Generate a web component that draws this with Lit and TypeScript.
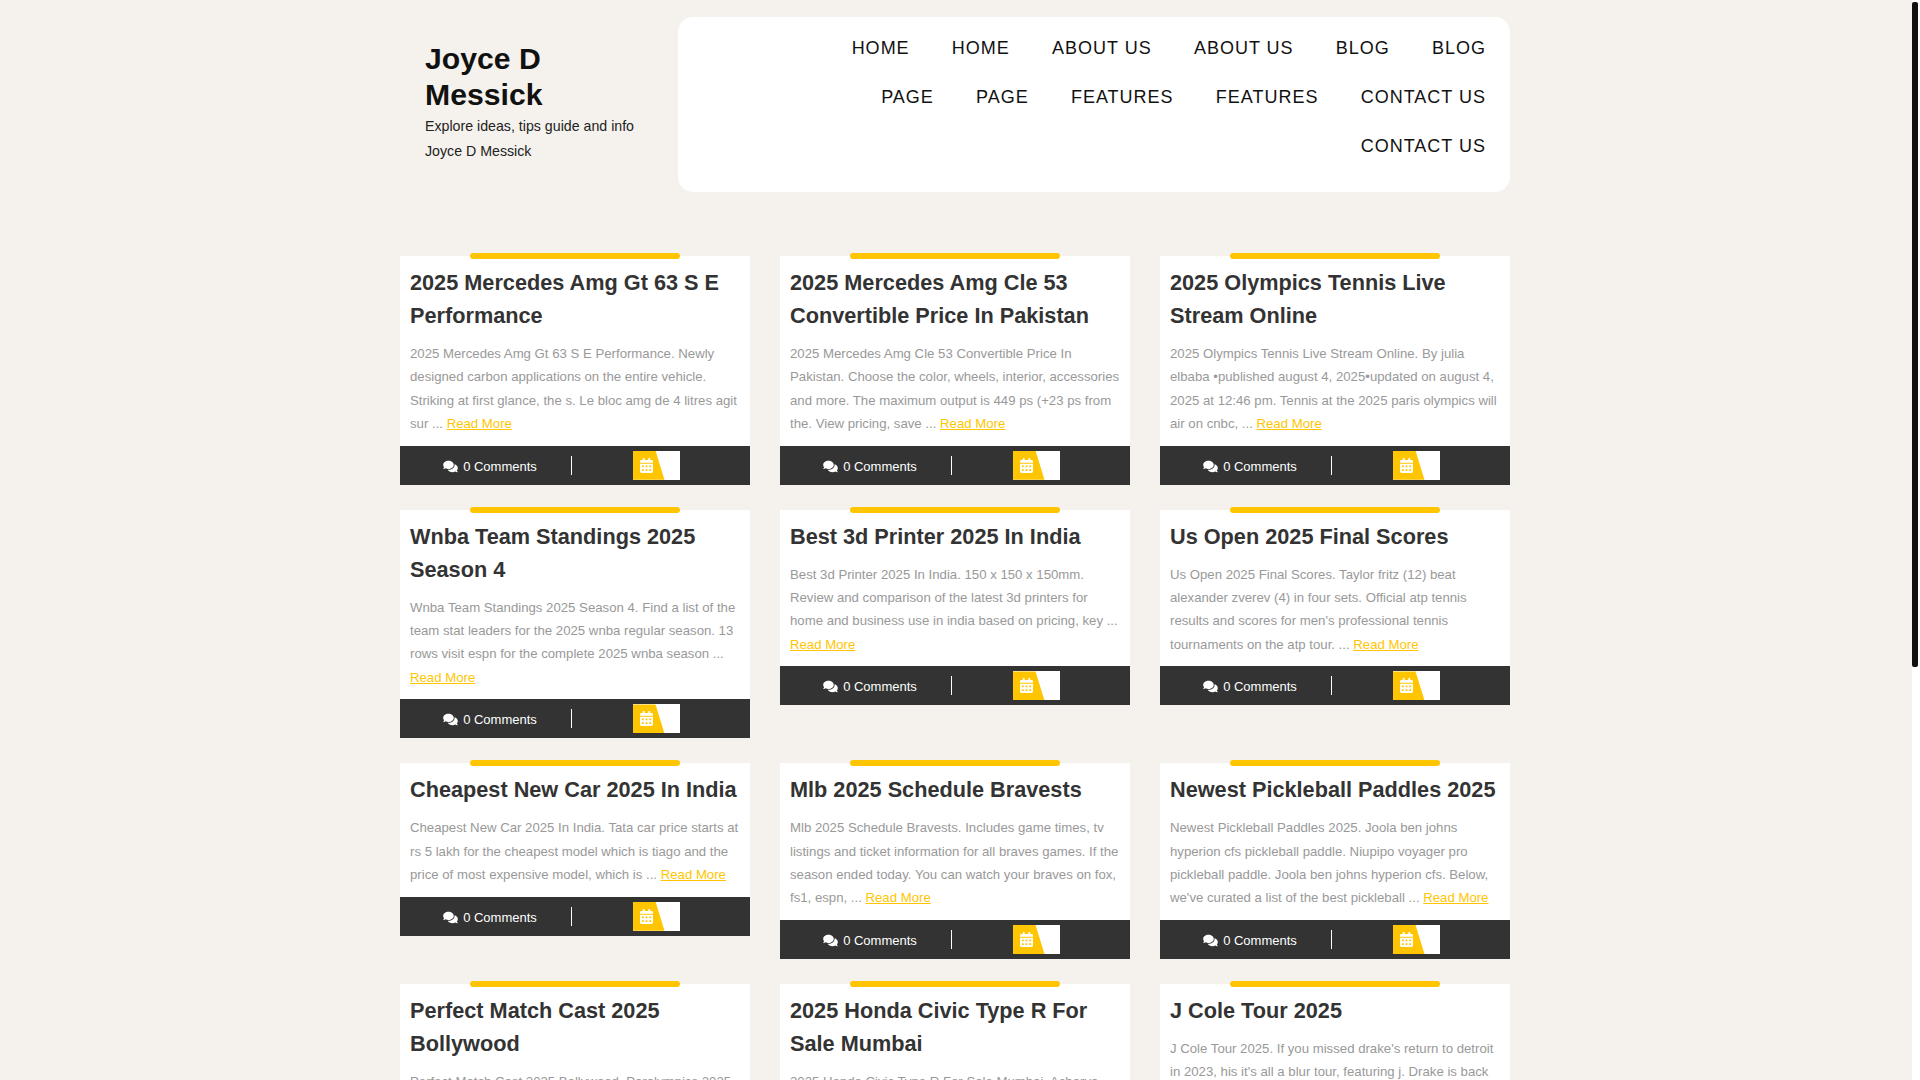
import { LitElement, html, css } from "lit";
import { customElement } from "lit/decorators.js";

const NAV = ["HOME", "HOME", "ABOUT US", "ABOUT US", "BLOG", "BLOG", "PAGE", "PAGE", "FEATURES", "FEATURES", "CONTACT US", "CONTACT US"];

const POSTS = [
  ["2025 Mercedes Amg Gt 63 S E Performance", "2025 Mercedes Amg Gt 63 S E Performance. Newly designed carbon applications on the entire vehicle. Striking at first glance, the s. Le bloc amg de 4 litres agit sur ..."],
  ["2025 Mercedes Amg Cle 53 Convertible Price In Pakistan", "2025 Mercedes Amg Cle 53 Convertible Price In Pakistan. Choose the color, wheels, interior, accessories and more. The maximum output is 449 ps (+23 ps from the. View pricing, save ..."],
  ["2025 Olympics Tennis Live Stream Online", "2025 Olympics Tennis Live Stream Online. By julia elbaba •published august 4, 2025•updated on august 4, 2025 at 12:46 pm. Tennis at the 2025 paris olympics will air on cnbc, ..."],
  ["Wnba Team Standings 2025 Season 4", "Wnba Team Standings 2025 Season 4. Find a list of the team stat leaders for the 2025 wnba regular season. 13 rows visit espn for the complete 2025 wnba season ..."],
  ["Best 3d Printer 2025 In India", "Best 3d Printer 2025 In India. 150 x 150 x 150mm. Review and comparison of the latest 3d printers for home and business use in india based on pricing, key ..."],
  ["Us Open 2025 Final Scores", "Us Open 2025 Final Scores. Taylor fritz (12) beat alexander zverev (4) in four sets. Official atp tennis results and scores for men's professional tennis tournaments on the atp tour. ..."],
  ["Cheapest New Car 2025 In India", "Cheapest New Car 2025 In India. Tata car price starts at rs 5 lakh for the cheapest model which is tiago and the price of most expensive model, which is ..."],
  ["Mlb 2025 Schedule Bravests", "Mlb 2025 Schedule Bravests. Includes game times, tv listings and ticket information for all braves games. If the season ended today. You can watch your braves on fox, fs1, espn, ..."],
  ["Newest Pickleball Paddles 2025", "Newest Pickleball Paddles 2025. Joola ben johns hyperion cfs pickleball paddle. Niupipo voyager pro pickleball paddle. Joola ben johns hyperion cfs. Below, we've curated a list of the best pickleball ..."],
  ["Perfect Match Cast 2025 Bollywood", "Perfect Match Cast 2025 Bollywood. Paralympics 2025 announcement of the latest cast news for the upcoming film release this year with details ..."],
  ["2025 Honda Civic Type R For Sale Mumbai", "2025 Honda Civic Type R For Sale Mumbai. Acharya maintains more details on the latest price in the city with finance offers and dealers ..."],
  ["J Cole Tour 2025", "J Cole Tour 2025. If you missed drake's return to detroit in 2023, his it's all a blur tour, featuring j. Drake is back on stage this year with tickets and dates for every city ..."],
];

const COMMENTS = "M416 192c0-88.4-93.1-160-208-160S0 103.6 0 192c0 34.3 14.1 65.9 38 92-13.4 30.2-35.5 54.2-35.8 54.5-2.2 2.3-2.8 5.7-1.5 8.7S4.8 352 8 352c36.6 0 66.9-12.3 88.7-25 32.2 15.7 70.3 25 111.3 25 114.9 0 208-71.6 208-160zm122 220c23.9-26 38-57.7 38-92 0-66.9-53.5-124.2-129.3-148.1.9 6.6 1.3 13.3 1.3 20.1 0 105.9-107.7 192-240 192-10.8 0-21.3-.8-31.7-1.9C207.8 439.6 281.8 480 368 480c41 0 79.1-9.2 111.3-25 21.8 12.7 52.1 25 88.7 25 3.2 0 6.1-1.9 7.3-4.8 1.3-2.9.7-6.3-1.5-8.7-.3-.3-22.4-24.2-35.8-54.5z";
const CALENDAR = "M0 464c0 26.5 21.5 48 48 48h352c26.5 0 48-21.5 48-48V192H0v272zm320-196c0-6.6 5.4-12 12-12h40c6.6 0 12 5.4 12 12v40c0 6.6-5.4 12-12 12h-40c-6.6 0-12-5.4-12-12v-40zm0 128c0-6.6 5.4-12 12-12h40c6.6 0 12 5.4 12 12v40c0 6.6-5.4 12-12 12h-40c-6.6 0-12-5.4-12-12v-40zM192 268c0-6.6 5.4-12 12-12h40c6.6 0 12 5.4 12 12v40c0 6.6-5.4 12-12 12h-40c-6.6 0-12-5.4-12-12v-40zm0 128c0-6.6 5.4-12 12-12h40c6.6 0 12 5.4 12 12v40c0 6.6-5.4 12-12 12h-40c-6.6 0-12-5.4-12-12v-40zM64 268c0-6.6 5.4-12 12-12h40c6.6 0 12 5.4 12 12v40c0 6.6-5.4 12-12 12H76c-6.6 0-12-5.4-12-12v-40zm0 128c0-6.6 5.4-12 12-12h40c6.6 0 12 5.4 12 12v40c0 6.6-5.4 12-12 12H76c-6.6 0-12-5.4-12-12v-40zM400 64h-48V16c0-8.8-7.2-16-16-16h-32c-8.8 0-16 7.2-16 16v48H160V16c0-8.8-7.2-16-16-16h-32c-8.8 0-16 7.2-16 16v48H48C21.5 64 0 85.5 0 112v48h448v-48c0-26.5-21.5-48-48-48z";

@customElement("app-root")
export class AppRoot extends LitElement {
  static styles = css`
    :host {
      display: flex;
      width: 1920px;
      height: 1080px;
      overflow: hidden;
      background: #fff;
      font-family: "Liberation Sans", Arial, sans-serif;
    }
    .page {
      width: 1912px;
      height: 1080px;
      flex: none;
      box-sizing: border-box;
      padding-right: 2px;
      overflow: hidden;
      background: #f5f2ed;
    }
    .scroll {
      flex: 1;
      padding: 2px 2px 0 0;
    }
    .thumb {
      height: 665px;
      border-radius: 2px;
      background: #111;
    }
    .wrap {
      width: 1110px;
      margin: 0 auto;
    }
    header {
      display: flex;
      padding-top: 17px;
    }
    .brand {
      width: 278px;
      flex: none;
      padding: 24px 25px 0;
      box-sizing: border-box;
    }
    .brand h1 {
      margin: 0 0 1px;
      font-size: 30.2px;
      line-height: 36px;
      font-weight: 700;
      color: #111;
    }
    .brand p {
      margin: 0;
      font-size: 14.2px;
      line-height: 25px;
      color: #222;
    }
    nav {
      flex: 1;
      height: 175px;
      box-sizing: border-box;
      padding: 7px 24px 0 150px;
      background: #fff;
      border-radius: 15px;
      display: flex;
      flex-wrap: wrap;
      justify-content: flex-end;
      align-content: flex-start;
      column-gap: 42.2px;
    }
    nav a {
      font-size: 18px;
      line-height: 49px;
      letter-spacing: 1px;
      color: #111;
    }
    .grid {
      margin-top: 64px;
      display: grid;
      grid-template-columns: repeat(3, 350px);
      column-gap: 30px;
      row-gap: 25px;
      align-items: start;
    }
    .card {
      position: relative;
      background: #fff;
    }
    .card::before {
      content: "";
      position: absolute;
      top: -3px;
      left: 70px;
      width: 210px;
      height: 6px;
      border-radius: 3px;
      background: #ffc500;
    }
    .body {
      padding: 10px 10px 10.5px;
    }
    h2 {
      margin: 0 0 10px;
      font-size: 21.7px;
      line-height: 33px;
      font-weight: 700;
      color: #333;
    }
    .body p {
      margin: 0;
      font-size: 13.2px;
      line-height: 23.3px;
      color: #999;
    }
    .body a {
      color: #ffc500;
      text-decoration: underline;
    }
    .foot {
      height: 39px;
      display: flex;
      align-items: center;
      background: #333;
      color: #fff;
    }
    .comments {
      width: 172px;
      box-sizing: border-box;
      height: 19px;
      display: flex;
      align-items: center;
      justify-content: center;
      gap: 5px;
      padding: 2px 0 0 9px;
      border-right: 1px solid #fff;
      font-size: 13px;
    }
    .comments svg {
      width: 15px;
      height: 13px;
      fill: #fff;
    }
    .date {
      margin-left: 61px;
      width: 47px;
      height: 29px;
      position: relative;
      background: #fff;
    }
    .date .tab {
      position: absolute;
      inset: 0;
      background: #ffc500;
      clip-path: polygon(0 0, 48% 0, 67% 100%, 0 100%);
    }
    .date svg {
      position: absolute;
      left: 7px;
      top: 7px;
      width: 13px;
      height: 15px;
      fill: #fff;
    }
  `;

  render() {
    return html`
      <div class="page">
        <div class="wrap">
          <header>
            <div class="brand">
              <h1>Joyce D Messick</h1>
              <p>Explore ideas, tips guide and info</p>
              <p>Joyce D Messick</p>
            </div>
            <nav>${NAV.map((n) => html`<a>${n}</a>`)}</nav>
          </header>
          <div class="grid">
            ${POSTS.map(
              ([title, text]) => html`
                <article class="card">
                  <div class="body">
                    <h2>${title}</h2>
                    <p>${text} <a>Read More</a></p>
                  </div>
                  <div class="foot">
                    <div class="comments">
                      <svg viewBox="0 0 576 512"><path d=${COMMENTS}></path></svg>
                      <span>0 Comments</span>
                    </div>
                    <div class="date">
                      <div class="tab"></div>
                      <svg viewBox="0 0 448 512"><path d=${CALENDAR}></path></svg>
                    </div>
                  </div>
                </article>
              `
            )}
          </div>
        </div>
      </div>
      <div class="scroll"><div class="thumb"></div></div>
    `;
  }
}
